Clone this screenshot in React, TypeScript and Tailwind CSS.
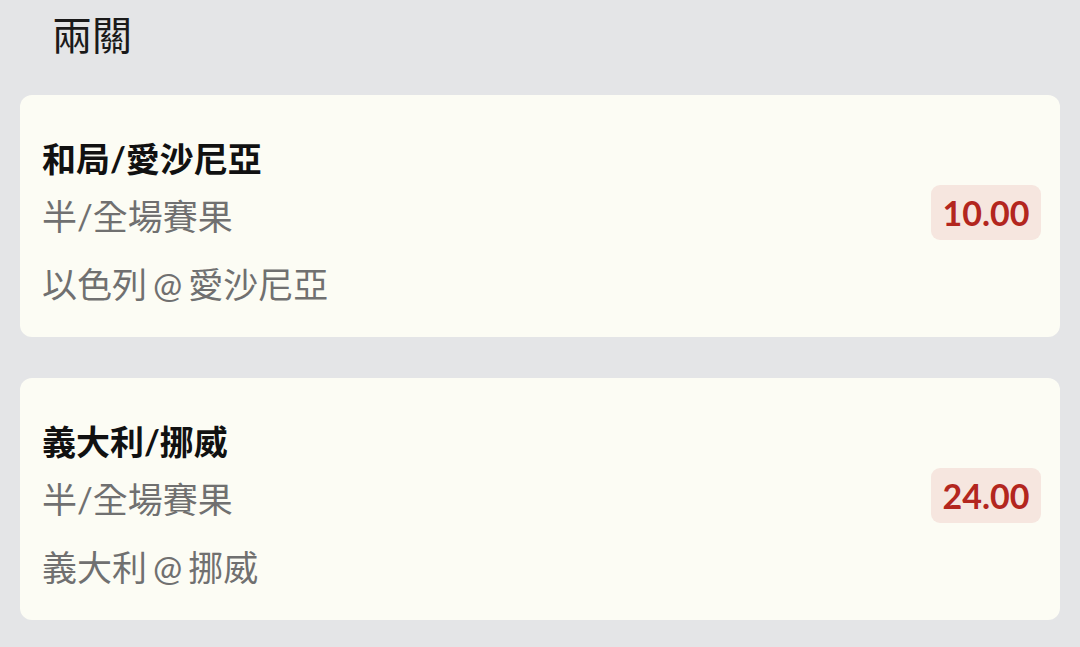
import React from "react";

const font = { fontFamily: '"Lato", "Noto Sans CJK TC", sans-serif' };

type Bet = { title: string; market: string; match: string; odds: string };

const bets: Bet[] = [
  { title: "和局/愛沙尼亞", market: "半/全場賽果", match: "以色列 @ 愛沙尼亞", odds: "10.00" },
  { title: "義大利/挪威", market: "半/全場賽果", match: "義大利 @ 挪威", odds: "24.00" },
];

function Card({ bet }: { bet: Bet }) {
  return (
    <div className="mx-[20px] flex h-[242px] items-center rounded-[12px] bg-[#fcfcf4] pl-[22px] pr-[19px]">
      <div className="flex flex-1 flex-col pt-[10px]">
        <div className="text-[34px] font-bold leading-[44px] text-[#111111]">{bet.title}</div>
        <div className="mt-[13px] text-[35px] leading-[44px] text-[#707070]">{bet.market}</div>
        <div className="mt-[24px] text-[35px] leading-[44px] text-[#707070] [word-spacing:-3px]">{bet.match}</div>
      </div>
      <div className="mb-[7px] flex h-[55px] w-[110px] items-center justify-center rounded-[9px] bg-[#f6e6df] text-[34px] font-bold text-[#b3261e]">
        {bet.odds}
      </div>
    </div>
  );
}

export default function App() {
  return (
    <div className="h-[647px] w-[1080px] overflow-hidden bg-[#e4e5e7]" style={font}>
      <div className="flex h-[95px] items-start pl-[52px] pt-[12px] text-[40px] leading-[46px] text-[#1a1a1a]">兩關</div>
      <div className="flex flex-col gap-[41px]">
        {bets.map((b) => (
          <Card key={b.odds} bet={b} />
        ))}
      </div>
    </div>
  );
}
